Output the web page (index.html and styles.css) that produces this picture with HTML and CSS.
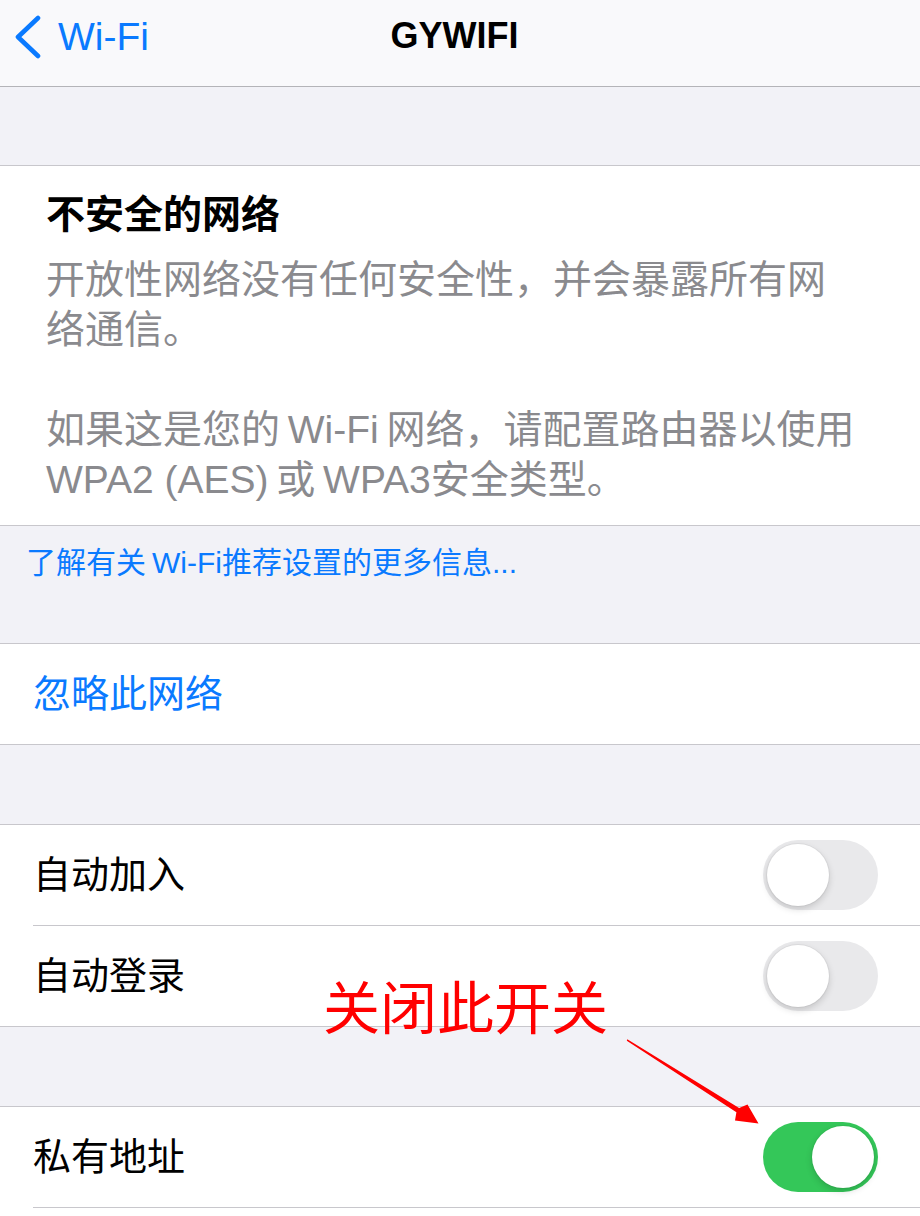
FILE: index.html
```html
<!DOCTYPE html>
<html lang="zh-CN">
<head>
<meta charset="utf-8">
<title>GYWIFI</title>
<link rel="stylesheet" href="styles.css">
</head>
<body>
<div class="page">
  <header class="nav">
    <div class="back">
      <svg class="chevron" width="30" height="44" viewBox="0 0 30 44">
        <polyline points="25,3 5,22 25,41" fill="none" stroke="#0a7aff" stroke-width="4.6" stroke-linecap="round" stroke-linejoin="round"/>
      </svg>
      <span class="back-label">Wi-Fi</span>
    </div>
    <div class="nav-title">GYWIFI</div>
  </header>

  <div class="spacer spacer-top"></div>

  <section class="group info">
    <h1 class="info-title">不安全的网络</h1>
    <p class="info-text">开放性网络没有任何安全性，并会暴露所有网络通信。</p>
    <p class="info-text">如果这是您的&#8201;Wi-Fi&#8201;网络，请配置路由器以使用WPA2 (AES)&#8201;或&#8201;WPA3安全类型。</p>
  </section>

  <div class="footer-band">
    <span class="footer-link">了解有关&#8201;Wi-Fi推荐设置的更多信息...</span>
  </div>

  <section class="group">
    <div class="row"><span class="row-label action">忽略此网络</span></div>
  </section>

  <div class="spacer"></div>

  <section class="group">
    <div class="row">
      <span class="row-label">自动加入</span>
      <span class="toggle"><span class="knob"></span></span>
    </div>
    <div class="sep"></div>
    <div class="row">
      <span class="row-label">自动登录</span>
      <span class="toggle"><span class="knob"></span></span>
    </div>
  </section>

  <div class="spacer"></div>

  <section class="group group-open">
    <div class="row">
      <span class="row-label">私有地址</span>
      <span class="toggle on"><span class="knob"></span></span>
    </div>
    <div class="sep"></div>
  </section>

  <div class="annotation">关闭此开关</div>
  <svg class="arrow" width="920" height="1216" viewBox="0 0 920 1216">
    <polygon points="627.3,1039.2 739.1,1108.0 747.5,1104.5 758.5,1123.5 735,1120.5 736.4,1112.2 626.8,1040.8" fill="#ff0000"/>
  </svg>
</div>
</body>
</html>
```

FILE: styles.css
```css
* { box-sizing: border-box; }

html, body {
  margin: 0;
  padding: 0;
  background: #f2f2f7;
}

body {
  font-family: "Liberation Sans", "Noto Sans CJK SC", sans-serif;
  color: #000;
}

.page {
  position: relative;
  width: 920px;
  height: 1216px;
  overflow: hidden;
}

.nav {
  position: relative;
  height: 87px;
  background: #f9f9fb;
  border-bottom: 1px solid #b4b4b8;
  display: flex;
  align-items: center;
}

.back {
  display: flex;
  align-items: center;
  padding-left: 13px;
  gap: 15px;
  height: 100%;
  padding-bottom: 12px;
}

.chevron { display: block; }

.back-label {
  color: #0a7aff;
  font-size: 39px;
  line-height: 44px;
}

.nav-title {
  position: absolute;
  left: 0;
  right: 0;
  top: 14px;
  text-align: center;
  font-size: 36px;
  line-height: 44px;
  font-weight: 700;
  padding-right: 11px;
}

.spacer { height: 79px; }
.spacer-top { height: 78px; }

.group {
  background: #fff;
  border-top: 1px solid #c8c7cc;
  border-bottom: 1px solid #c8c7cc;
}

.group-open {
  border-bottom: none;
  padding-bottom: 20px;
}

.info {
  padding: 24px 50px 19px 46px;
  height: 361px;
}

.info-title {
  margin: 0 0 15px;
  font-size: 39px;
  line-height: 50px;
  font-weight: 700;
}

.info-text {
  margin: 0 0 50px;
  font-size: 39px;
  line-height: 50px;
  color: #8a8a8e;
  max-width: 816px;
}

.info-text:last-child { margin-bottom: 0; }

.footer-band {
  height: 117px;
  padding: 17px 0 0 26px;
}

.footer-link {
  color: #0a7aff;
  font-size: 30px;
  line-height: 40px;
}

.row {
  height: 100px;
  display: flex;
  align-items: center;
  justify-content: space-between;
  padding: 0 42px 0 33px;
}

.row-label {
  font-size: 38px;
  line-height: 50px;
}

.row-label.action { color: #0a7aff; }

.sep {
  height: 1px;
  margin-left: 33px;
  background: #c8c7cc;
}

.toggle {
  position: relative;
  width: 115px;
  height: 70px;
  border-radius: 35px;
  background: #e9e9eb;
  display: flex;
  align-items: center;
  padding: 0 4px;
}

.knob {
  width: 62px;
  height: 62px;
  border-radius: 50%;
  background: #fff;
  box-shadow: 0 3px 7px rgba(0, 0, 0, 0.16), 0 0 0 1px rgba(0, 0, 0, 0.04);
}

.toggle.on {
  background: #34c759;
  justify-content: flex-end;
}

.annotation {
  position: absolute;
  left: 323px;
  top: 974px;
  font-family: "Noto Sans CJK SC", sans-serif;
  font-size: 57px;
  line-height: 60px;
  color: #ff0000;
}

.arrow {
  position: absolute;
  left: 0;
  top: 0;
  pointer-events: none;
}
```
